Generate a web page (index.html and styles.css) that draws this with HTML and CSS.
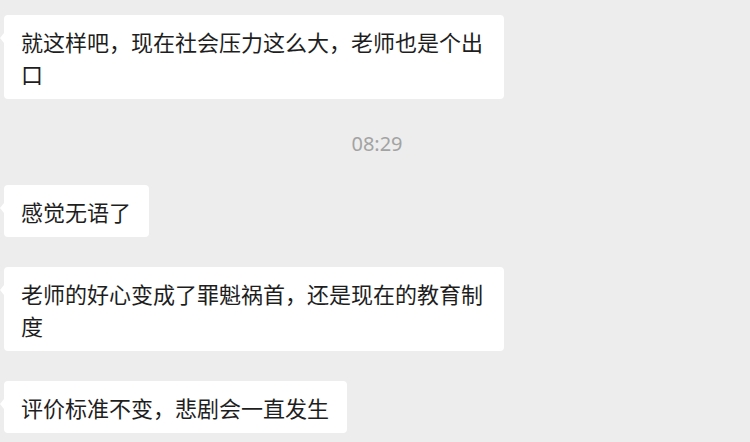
FILE: index.html
```html
<!DOCTYPE html>
<html lang="zh-CN">
<head>
    <meta charset="UTF-8">
    <meta name="viewport" content="width=device-width, initial-scale=1.0">
    <title>聊天记录</title>
    <link rel="stylesheet" href="styles.css">
</head>
<body>
    <div class="chat">
        <div class="bubble">就这样吧，现在社会压力这么大，老师也是个出口</div>

        <div class="time">08:29</div>

        <div class="bubble">感觉无语了</div>
        <div class="bubble">老师的好心变成了罪魁祸首，还是现在的教育制度</div>
        <div class="bubble">评价标准不变，悲剧会一直发生</div>
    </div>
</body>
</html>
```

FILE: styles.css
```css
body {
    margin: 0;
    background-color: #ededed;
    font-family: "Noto Sans CJK SC", "Noto Sans", sans-serif;
}

.chat {
    display: flex;
    flex-direction: column;
    align-items: flex-start;
    padding: 15px 0 0 4px;
}

.bubble {
    position: relative;
    max-width: 500px;
    box-sizing: border-box;
    padding: 10px 18px 10px 17px;
    margin-bottom: 30px;
    background: #fff;
    border-radius: 4px;
    color: #1e1e1e;
    font-size: 22px;
    line-height: 32px;
}

/* little tail on the left */
.bubble::before {
    content: "";
    position: absolute;
    left: -4px;
    top: 18px;
    border-top: 5px solid transparent;
    border-bottom: 5px solid transparent;
    border-right: 4px solid #fff;
}

.time {
    align-self: center;
    margin: 1px 0 27px;
    color: #a3a3a3;
    font-family: "Noto Sans", sans-serif;
    font-size: 20px;
    line-height: 28px;
}
```
